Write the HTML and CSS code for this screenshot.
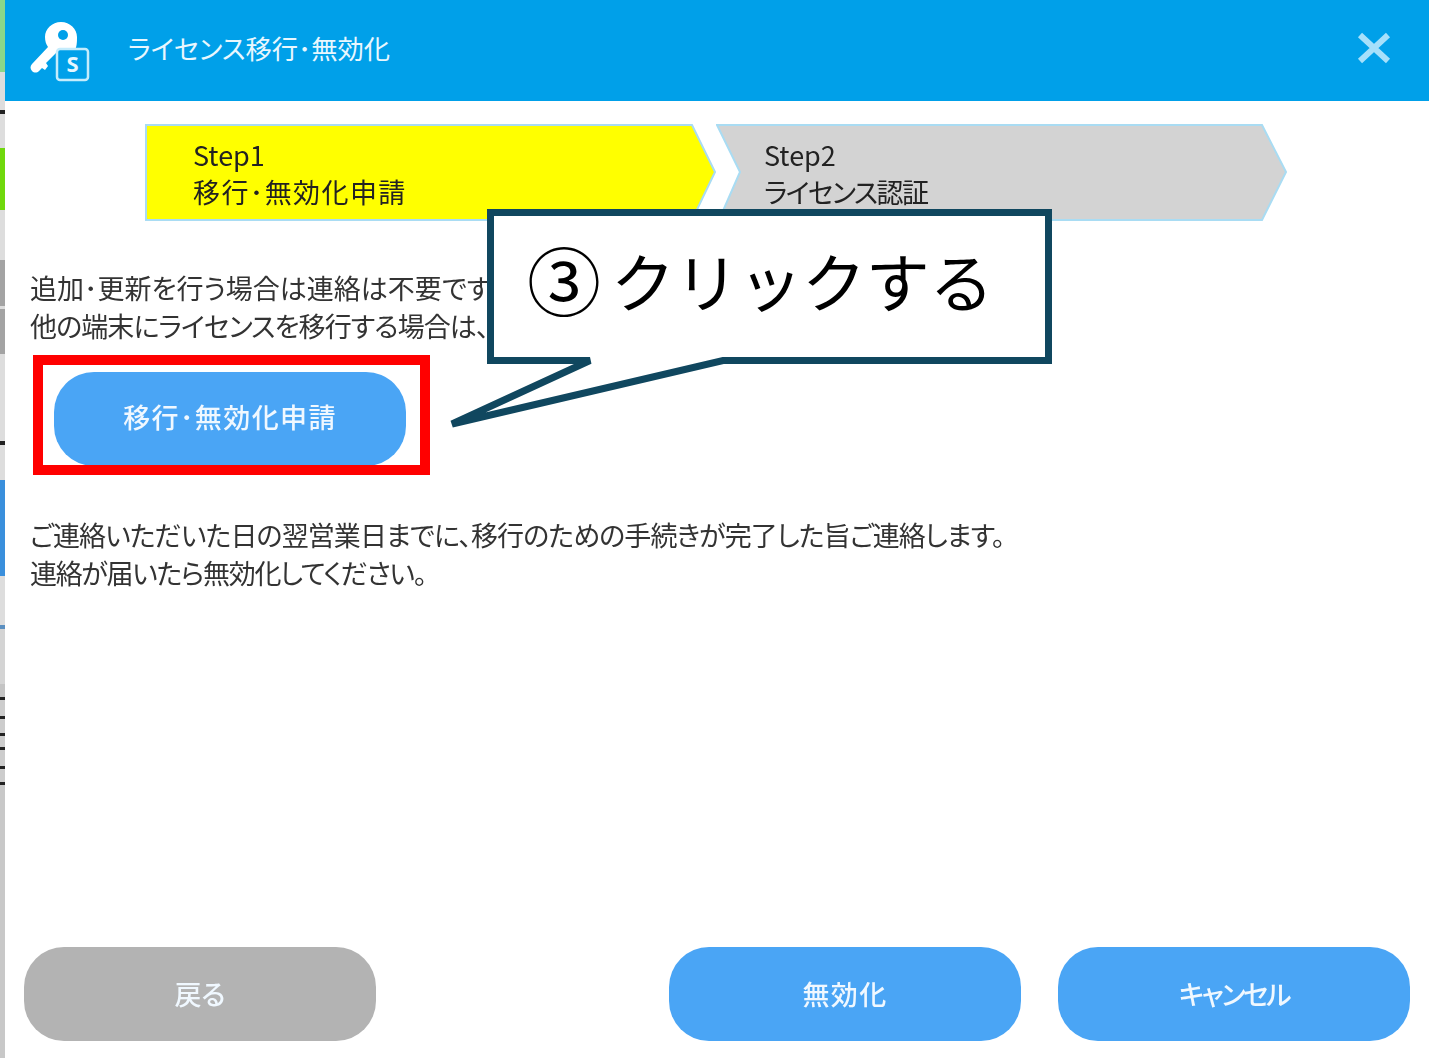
FILE: index.html
```html
<!DOCTYPE html>
<html lang="ja">
<head>
    <meta charset="UTF-8">
    <meta name="viewport" content="width=device-width, initial-scale=1.0">
    <title>ライセンス移行・無効化</title>
    <link rel="stylesheet" href="styles.css">
</head>
<body>

<div class="page">
    <!-- Window behind the dialog, only a sliver is visible -->
    <div class="back-strip"></div>

    <div class="dialog">
        <header class="title-bar">
            <svg class="app-icon" viewBox="0 0 60 60" aria-hidden="true">
                <path class="key" d="M31 0 C22 0 15 7 15 15 C15 19 16 22 18 25 L2 42 C0 44 0 47 2 49 C4 51 7 51 9 49 L12 46 L15 48 L18 44 L16 41 L26 31 C27 29 29 29 31 29 L44 29 C47 26 47 20 47 15 C47 7 40 0 31 0 Z"/>
                <circle class="key-hole" cx="33" cy="13" r="5"/>
                <rect class="key-badge" x="27" y="27" width="31" height="31" rx="3"/>
                <text class="key-letter" x="42.500" y="50">S</text>
            </svg>
            <h1 class="title">ライセンス移行･無効化</h1>
            <svg class="close-icon" viewBox="0 0 34 32" aria-hidden="true">
                <path d="M3 3 L31 29 M31 3 L3 29"/>
            </svg>
        </header>

        <div class="steps">
            <div class="step">
                <svg class="step-shape" viewBox="0 0 571 97" aria-hidden="true">
                    <polygon class="shape-active" points="1,1 547,1 570,48 547,96 1,96"/>
                </svg>
                <div class="step-text">
                    <div>Step1</div>
                    <div class="wide-text">移行･無効化申請</div>
                </div>
            </div>
            <div class="step">
                <svg class="step-shape" viewBox="0 0 571 97" aria-hidden="true">
                    <polygon class="shape-todo" points="1,1 546,1 570,48 546,96 3,96 24,48"/>
                </svg>
                <div class="step-text">
                    <div>Step2</div>
                    <div class="narrow-text">ライセンス認証</div>
                </div>
            </div>
        </div>

        <div class="message message-top">
            <p>追加･更新を行う場合は連絡は不要です。</p>
            <p class="line-tight">他の端末にライセンスを移行する場合は、</p>
        </div>

        <button class="pill pill-apply wide-text" type="button">移行･無効化申請</button>

        <div class="message message-bottom">
            <p class="line-tighter">ご連絡いただいた日の翌営業日までに、移行のための手続きが完了した旨ご連絡します。</p>
            <p class="line-tightest">連絡が届いたら無効化してください。</p>
        </div>

        <footer class="actions">
            <button class="pill pill-back" type="button">戻る</button>
            <button class="pill wide-text" type="button">無効化</button>
            <button class="pill cancel-text" type="button">キャンセル</button>
        </footer>
    </div>

    <!-- Annotations on top of the screenshot -->
    <div class="red-frame"></div>

    <div class="callout">
        <svg class="callout-shape" viewBox="0 0 605 220" aria-hidden="true">
            <path d="M41.500 3.500 H599.500 V151.500 H274 L3 215 L141 151.500 H41.500 Z"/>
        </svg>
        <div class="callout-text"><span class="callout-num">③</span>クリックする</div>
    </div>
</div>

</body>
</html>
```

FILE: styles.css
```css
* {
    box-sizing: border-box;
}

html, body {
    margin: 0;
    padding: 0;
}

body {
    background-color: #fff;
    font-family: "Noto Sans CJK JP", "Noto Sans", sans-serif;
    color: #333;
}

p, h1 {
    margin: 0;
    font-weight: 400;
}

.page {
    position: relative;
    display: flex;
    width: 1429px;
    height: 1058px;
    overflow: hidden;
}

/* Left edge */
.back-strip {
    flex: none;
    width: 5px;
    filter: blur(0.6px);
    background: linear-gradient(to bottom,
        #8ad78a 0 72px,
        #ddd 72px 110px, #222 110px 114px, #ddd 114px 148px,
        #70d80c 148px 210px,
        #ddd 210px 260px,
        #a3a3a3 260px 306px, #ddd 306px 309px, #a3a3a3 309px 354px,
        #ddd 354px 441px, #222 441px 445px, #ddd 445px 480px,
        #3a8fdc 480px 576px,
        #ddd 576px 625px, #5b8fc0 625px 629px, #d4d4d4 629px 684px,
        #c4c4c4 684px 697px, #222 697px 700px, #ccc 700px 716px, #222 716px 719px,
        #ccc 719px 733px, #222 733px 736px, #ccc 736px 747px, #222 747px 750px,
        #ccc 750px 766px, #222 766px 769px, #ccc 769px 782px, #222 782px 785px,
        #c8c8c8 785px 1058px);
}

.dialog {
    flex: 1;
    display: flex;
    flex-direction: column;
    min-width: 0;
    filter: blur(0.6px);
}

/* Title bar */
.title-bar {
    flex: none;
    display: flex;
    align-items: center;
    height: 101px;
    padding: 0 38px 0 25px;
    background-color: #00a0e9;
}

.app-icon {
    flex: none;
    width: 60px;
    height: 60px;
    margin-top: 2px;
}

.key {
    fill: #fff;
}

.key-hole {
    fill: #00a0e9;
}

.key-badge {
    fill: #00a0e9;
    stroke: #c5ecfc;
    stroke-width: 2.500;
}

.key-letter {
    fill: #e6f7ff;
    font-family: "Noto Sans", sans-serif;
    font-size: 22px;
    font-weight: 700;
    text-anchor: middle;
}

.title {
    flex: 1;
    margin: -6px 0 0 38px;
    color: #e8f7fe;
    font-size: 26.300px;
    font-feature-settings: "palt";
}

.close-icon {
    flex: none;
    width: 34px;
    height: 32px;
    margin-top: -5px;
}

.close-icon path {
    fill: none;
    stroke: #a6e0fb;
    stroke-width: 6;
}

/* Steps */
.steps {
    flex: none;
    display: flex;
    height: 97px;
    margin: 23px 0 0 140px;
}

.step {
    position: relative;
    width: 571px;
    height: 97px;
}

.step-shape {
    position: absolute;
    left: 0;
    top: 0;
    width: 100%;
    height: 100%;
}

.step-shape polygon {
    stroke: #a9dcf3;
    stroke-width: 2;
}

.shape-active {
    fill: #ff0;
}

.shape-todo {
    fill: #d3d3d3;
}

.step-text {
    position: relative;
    padding: 12px 0 0 48px;
    color: #222;
    font-size: 27px;
    line-height: 37px;
    font-feature-settings: "palt";
    white-space: nowrap;
}

.wide-text {
    letter-spacing: 1.400px;
}

.narrow-text {
    letter-spacing: -1.600px;
}

/* Body text */
.message {
    flex: none;
    padding-left: 25px;
    font-size: 27px;
    line-height: 38px;
    font-feature-settings: "palt";
    white-space: nowrap;
}

.message-top {
    margin-top: 48px;
}

.message-bottom {
    margin-top: 50px;
}

.line-tight {
    letter-spacing: -0.900px;
}

.line-tighter {
    letter-spacing: -0.900px;
}

.line-tightest {
    letter-spacing: -1.300px;
}

/* Buttons */
.pill {
    flex: none;
    width: 352px;
    height: 94px;
    padding: 0 0 2px;
    border: 0;
    border-radius: 40px;
    background-color: #4aa5f5;
    color: #f0f8ff;
    font-family: inherit;
    font-size: 27px;
    font-weight: 500;
    font-feature-settings: "palt";
}

.pill-apply {
    margin: 27px 0 0 49px;
    padding-bottom: 5px;
}

.pill-back {
    margin-right: auto;
    background-color: #b3b3b3;
}

.cancel-text {
    letter-spacing: -2.400px;
}

.actions {
    flex: none;
    display: flex;
    gap: 37px;
    margin-top: auto;
    padding: 0 19px 17px 19px;
}

/* Annotations */
.red-frame {
    position: absolute;
    left: 33px;
    top: 355px;
    width: 397px;
    height: 120px;
    border: 10px solid #f00;
}

.callout {
    position: absolute;
    left: 449px;
    top: 209px;
    width: 605px;
    height: 220px;
}

.callout-shape {
    position: absolute;
    left: 0;
    top: 0;
    width: 100%;
    height: 100%;
}

.callout-shape path {
    fill: #fff;
    stroke: #10475f;
    stroke-width: 7;
}

.callout-text {
    position: relative;
    padding: 21px 0 0 78px;
    color: #000;
    font-size: 64px;
    line-height: 96px;
    letter-spacing: -0.300px;
    white-space: nowrap;
}

.callout-num {
    margin-right: 10px;
    font-size: 74px;
    letter-spacing: 0;
    vertical-align: -3px;
}
```
